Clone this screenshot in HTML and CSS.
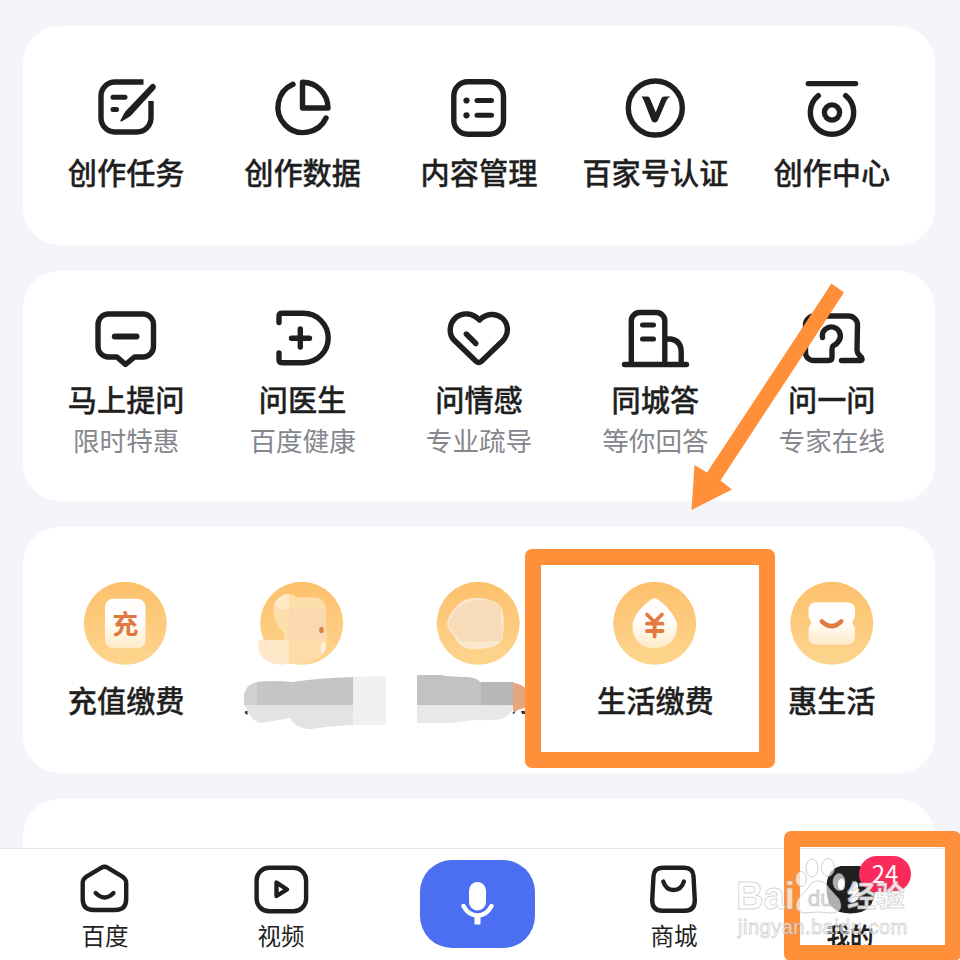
FILE: index.html
```html
<!DOCTYPE html>
<html lang="zh-CN">
<head>
<meta charset="utf-8">
<title>我的</title>
<link rel="stylesheet" href="styles.css">
</head>
<body>
<svg class="defs" width="0" height="0" aria-hidden="true">
  <defs>
    <linearGradient id="coin" x1="0" y1="0" x2="0" y2="1"><stop offset="0" stop-color="#fdc06c"/><stop offset="1" stop-color="#fdd58e"/></linearGradient>
    <linearGradient id="paper" x1="0" y1="0" x2="0" y2="1"><stop offset=".45" stop-color="#fffefc"/><stop offset="1" stop-color="#feeac6"/></linearGradient>
  </defs>
</svg>
<main class="page">
  <section class="card card-create">
    <div class="item">
      <svg class="icon" viewBox="90 72 72 72"><path class="flat" d="M143.500 82H115a14 14 0 0 0-14 14v22a14 14 0 0 0 14 14h22a14 14 0 0 0 14-14v-17"/><path class="w5" d="M113 97.2h12M113 109.500h3.500"/><path class="solid" d="M151 84.600q2.200-1.600 4 .2t.2 4.200L132 114.500q-2 2.200-4.500 3.400l-6 3.600q-1.500.5-1-1.200l3-5.800q1-2.200 3-4.200z"/></svg>
      <span class="label">创作任务</span>
    </div>
    <div class="item">
      <svg class="icon" viewBox="267 72 72 72"><path d="M293 84.300A25.200 25.200 0 1 0 326 118"/><path d="M302.500 82.300a25.500 25.500 0 0 1 25.500 25.700h-25.500z"/></svg>
      <span class="label">创作数据</span>
    </div>
    <div class="item">
      <svg class="icon" viewBox="443 72 72 72"><rect x="453.800" y="81.700" width="49.700" height="52.600" rx="14"/><path class="w5" d="M477 100.500h14.500M477 115.300h14.500"/><circle class="solid" cx="466.500" cy="100.500" r="3.100"/><circle class="solid" cx="466.500" cy="115.300" r="3.100"/></svg>
      <span class="label">内容管理</span>
    </div>
    <div class="item">
      <svg class="icon" viewBox="619 72 72 72"><circle cx="655.300" cy="108" r="27"/><path class="solid" d="M641.500 96.500h6q1.600 0 2.300 1.600l6 14.200 5.400-13.600q.9-2.200 3.200-2.200h6.100q-2.600 1.200-3.800 3.600l-8.600 19.900q-.9 2.600-3.400 2.600t-3.300-2.500l-7.700-19.800q-.8-2-2.200-3.800z"/></svg>
      <span class="label">百家号认证</span>
    </div>
    <div class="item">
      <svg class="icon" viewBox="796 72 72 72"><path d="M808.300 83.600h47.300M818.300 95.700a21.700 21.700 0 1 0 27.400 0"/><circle cx="832" cy="112.500" r="7.600"/></svg>
      <span class="label">创作中心</span>
    </div>
  </section>

  <section class="card card-ask">
    <div class="item">
      <svg class="icon" viewBox="90 302 72 72"><path d="M109 314h34a10.500 10.500 0 0 1 10.500 10.500v22a10.500 10.500 0 0 1-10.500 10.500h-8.500l-9 7.500-8.500-7.500h-8a10.500 10.500 0 0 1-11-10.500v-22a10.500 10.500 0 0 1 11-10.500z"/><path class="w6" d="M114.800 336.500h21.700"/></svg>
      <span class="label">马上提问</span><span class="sub">限时特惠</span>
    </div>
    <div class="item">
      <svg class="icon" viewBox="267 302 72 72"><path d="M279 322.500v-6.200q0-3 3-3h21.500a24.700 24.700 0 0 1 0 49.400H282q-3 0-3-3v-6.700"/><path d="M300.300 329v18M291.500 338.300h18"/></svg>
      <span class="label">问医生</span><span class="sub">百度健康</span>
    </div>
    <div class="item">
      <svg class="icon" viewBox="443 302 72 72"><path d="M479.500 320C473 313 463 312 456.500 317 449 323 448 334 454.500 340.500L476 361.300q2.800 2.400 5.500 0L503 340.500C509.500 333 508.500 323.500 502 318 495 312.500 486 313.500 479.500 320z"/><path d="M466.300 334l9.500 9.500"/></svg>
      <span class="label">问情感</span><span class="sub">专业疏导</span>
    </div>
    <div class="item">
      <svg class="icon" viewBox="619 302 72 72"><path d="M624.500 364.500h62M631.300 364v-43a8.500 8.500 0 0 1 8.500-8.500h16.500a8.500 8.500 0 0 1 8.500 8.500v43M667 338.700q14.200.3 14.200 13V364"/><path class="w5" d="M642.500 325h11M642.500 339h11"/></svg>
      <span class="label">同城答</span><span class="sub">等你回答</span>
    </div>
    <div class="item">
      <svg class="icon" viewBox="796 302 72 72"><path d="M822.500 337.500a9 9 0 1 1 15.500 4.500q-1.500 2.500-5 4-1 1-1 4v7q0 3.500-3.500 3.500h-15a8 8 0 0 1-8-8V325a9 9 0 0 1 9-9h34a9 9 0 0 1 9 9l-.5 25q0 3 2.500 5.500l2 2q1.500 3-1 3h-19"/></svg>
      <span class="label">问一问</span><span class="sub">专家在线</span>
    </div>
  </section>

  <section class="card card-pay">
    <div class="item">
      <svg class="coin" viewBox="84 581 84 84"><circle cx="125.300" cy="623.300" r="41.500" fill="url(#coin)"/><rect x="105" y="598.800" width="40.500" height="49.500" rx="8" fill="url(#paper)"/><text class="coin-text" x="125.200" y="633.800">充</text></svg>
      <span class="label">充值缴费</span>
    </div>
    <div class="item">
      <svg class="coin" viewBox="261 581 84 84"><circle cx="301.700" cy="623.300" r="41.500" fill="url(#coin)"/></svg>
      <span class="label"></span>
    </div>
    <div class="item">
      <svg class="coin" viewBox="437 581 84 84"><circle cx="478.200" cy="623.300" r="41.500" fill="url(#coin)"/><path fill="#fbe7cd" d="M476 597.800q-14 .2-22 11-5 6-7 15 1 6 7 12 4 10 12 12.500 12 2.500 25-1 8-2 11-7.300 4-20-.5-32-5-9-25.500-10.200z"/><path fill="#f8dcba" d="M464 604q10-6 27-3 7 2 10 6-1 12 1 20 0 8-1 14-20 2-41 0l-12-15q2-13 16-22z"/></svg>
      <span class="label"></span>
    </div>
    <div class="item">
      <svg class="coin" viewBox="613 581 84 84"><circle cx="654.700" cy="623.300" r="41.500" fill="url(#coin)"/><path fill="url(#paper)" d="M651 599.500q3.500-2.600 7 0 9 6.500 15 15.500 4 6 4 11c0 13-8.500 22.200-22.500 22.200S632.500 639 632.500 626q0-5 3.500-11 6-9 15-15.500z"/><path class="ink" d="M647 614.500l7.500 7.500 7.500-7.500M647 623.700h15.500M647 631h15.500M654.600 622v14.500"/></svg>
      <span class="label">生活缴费</span>
    </div>
    <div class="item">
      <svg class="coin" viewBox="789.500 581 84 84"><circle cx="831.300" cy="623.300" r="41.500" fill="url(#coin)"/><path fill="url(#paper)" d="M816 602.300h30q8.500 0 8.500 8v5q0 2.500-1.500 4.500-2 3 0 5.500 1.500 2 1.500 4.500v7q0 8-8.500 8h-30q-8 0-8-8v-7q0-2.500 1.500-4.500 2-2.500 0-5.500-1.500-2-1.500-4.500v-5q0-8 8-8z"/><path class="ink smile" d="M821.300 621.300q9.700 9.500 19.500 0"/></svg>
      <span class="label">惠生活</span>
    </div>
  </section>
  <section class="card card-next"></section>
</main>

<nav class="tabbar">
  <div class="tab">
    <svg class="tab-icon" viewBox="75 861 60 56"><path d="M101.500 867.700q3-1.800 6 0l15 9q3.700 2.300 3.700 6.800v15.500q0 11-11 11h-21.500q-11 0-11-11v-15.500q0-4.500 3.700-6.800z"/><path d="M95.700 893q9 9 17.800 0"/></svg>
    <span>百度</span>
  </div>
  <div class="tab">
    <svg class="tab-icon" viewBox="251 861 60 56"><rect x="256.600" y="867.800" width="49.500" height="43.500" rx="12.500"/><path d="M276.500 882.500v13.500l10.500-6.500z"/></svg>
    <span>视频</span>
  </div>
  <div class="tab">
    <div class="voice">
      <svg viewBox="455 876 46 54"><rect x="469" y="882" width="17" height="28.500" rx="8.500" fill="#fff"/><path d="M463.500 906q5 9.500 14 9.500t14-9.500" fill="none" stroke="#fff" stroke-width="4.500" stroke-linecap="round"/><path d="M474.500 916h6v8.500h-6z" fill="#fff"/></svg>
    </div>
  </div>
  <div class="tab">
    <svg class="tab-icon" viewBox="644 861 60 56"><path d="M662.500 867.700h22q8.500 0 9 8.500l1.300 24q0 10.500-10 10.500h-22.600q-10 0-10-10.500l1.300-24q.5-8.500 9-8.500z"/><path d="M663.300 881.500q2.500 8.500 10.300 8.500t10.300-8.500"/></svg>
    <span>商城</span>
  </div>
  <div class="tab tab-active">
    <svg class="tab-icon" viewBox="820 861 60 56"><path class="solid" d="M841 866h18q16 3 16 22 0 25.500-24.500 25.500T826.500 888q0-19 14.500-22z"/><ellipse class="glint" cx="841.500" cy="884.500" rx="3.500" ry="6"/><path class="glint" d="M849 902q4-3 4-8-4 1-6-1 7-2 8-12 4 1 3 9 4 5-1 10-3 4-8 2z"/></svg>
    <span>我的</span>
    <b class="badge">24</b>
  </div>
</nav>

<!-- Smudges and pointer drawn over the page -->
<svg class="marks" viewBox="0 0 960 960">
  <path fill="#fddfab" d="M274 604q3-7 12-10 8 0 11 4 10-2 22 0 7 4 7 12v19q2 10-1 23l-25 9h-14l-2-28q-13-12-10-29z"/>
  <path fill="#fad9b2" d="M289 609h36q2 12 1 31h-37z"/>
  <path fill="#fee8c8" d="M274 604q3-7 12-10h3v15h-12zM260 640h29v22q-4 4-14 2-16-5-17-18 0-5 2-6z"/>
  <path fill="#fddcaa" d="M289 640h37q0 9-4 15-8 7-22 9h-11z"/>
  <path fill="#fff0da" d="M322 643q3-2 4 0 0 8-4 12-3-5 0-12z"/>
  <ellipse cx="321.500" cy="630" rx="2.300" ry="3.200" fill="#d68545"/>
  <path fill="#d0d0d1" d="M257 682q-11 2-13 13v10h13z"/>
  <path fill="#c5c5c6" d="M257 682q13-2 35 0 26-4 61-5v28h-96z"/>
  <path fill="#e3e3e5" d="M245 705h108v20q-24 1-42 4-14 1-21-11-16 3-30 5-10-3-15-18z"/>
  <path fill="#f0f0f1" d="M353 677l33-1v49h-33z"/>
  <path fill="#333" d="M245.500 711l2 0v4l-3-2z"/>
  <path fill="#c2c2c2" d="M417 675h24q12 2 27 2 10 1 13 6v22h-64z"/>
  <path fill="#b7b7b8" d="M481 682h33v23h-33z"/>
  <path fill="#e7e8e8" d="M417 705h97q-2 9-12 14-14 2-28 1l-24 3h-33z"/>
  <path fill="#e5a67f" d="M513 683q8 0 14 7v17q-7 2-14 5z"/>
  <path fill="#333" d="M512 713l4-2-2 3zM521 711h5v3h-4z"/>
  <path fill="#ff8f38" d="M831.500 283.500l12.500 9-123.500 188 11.500 9-40.500 20.500 3-45 12.500 7.500z"/>
</svg>
<div class="frame frame-pay"></div>
<div class="frame frame-mine"></div>

<div class="watermark">
  <svg class="paw" viewBox="790 850 60 66"><ellipse cx="801" cy="878" rx="5.500" ry="7.500"/><ellipse cx="812" cy="867" rx="6" ry="9"/><ellipse cx="828" cy="866.500" rx="6.500" ry="9"/><ellipse cx="839" cy="881" rx="6" ry="8.500"/><path d="M818 880q7 0 11 7l10 11q6 13-7 14-14-2-28 0-12-2-6-14l10-11q3-7 10-7z"/></svg>
  <span class="wm wm-bai">Bai</span>
  <span class="wm wm-du">du</span>
  <span class="wm wm-jy">经验</span>
  <span class="wm wm-url">jingyan.baidu.com</span>
</div>
</body>
</html>
```
FILE: styles.css
```css
* { box-sizing: border-box; }

body {
  position: relative;
  width: 960px;
  height: 960px;
  margin: 0;
  overflow: hidden;
  background: #f4f5fa;
  color: #1f1f1f;
  font-family: "Noto Sans CJK SC", sans-serif;
}

.defs { position: absolute; }

.page {
  display: flex;
  flex-direction: column;
  gap: 26px;
  height: 960px;
  padding: 26px 25px 0 23px;
}

.card {
  display: grid;
  grid-template-columns: repeat(5, 1fr);
  flex: none;
  padding: 0 15px;
  border-radius: 37px;
  background: #fff;
}

.card-create { height: 219px; padding-top: 46px; }
.card-ask { height: 230px; padding-top: 31px; }
.card-pay { height: 246px; padding-top: 54px; }
.card-next { height: 200px; }

.item {
  display: flex;
  flex-direction: column;
  align-items: center;
}

.icon, .tab-icon {
  fill: none;
  stroke: #1f1f1f;
  stroke-width: 5.4;
  stroke-linecap: round;
  stroke-linejoin: round;
}

.icon { width: 72px; height: 72px; }
.icon .flat { stroke-linecap: butt; }
.icon .w5 { stroke-width: 5; }
.icon .w6 { stroke-width: 6; }
.solid { fill: #1f1f1f; stroke: none; }
.glint { fill: #fff; stroke: none; }

.coin { width: 84px; height: 84px; overflow: visible; }

.coin-text {
  fill: #e0773f;
  font-size: 26px;
  font-weight: 700;
  text-anchor: middle;
}

.ink {
  fill: none;
  stroke: #e27a42;
  stroke-width: 3.8;
  stroke-linecap: round;
}

.ink.smile { stroke-width: 4.5; }

.label {
  height: 36px;
  margin-top: 9px;
  font-size: 29.2px;
  font-weight: 500;
  line-height: 36px;
  white-space: nowrap;
  -webkit-text-stroke: .3px #1f1f1f;
}

.card-ask .label { margin-top: 6px; }
.card-pay .label { margin-top: 16px; }

.sub {
  margin-top: 8px;
  color: #86878d;
  font-size: 26.6px;
  line-height: 32px;
}

.tabbar {
  position: absolute;
  left: 0;
  bottom: 0;
  display: grid;
  grid-template-columns: 176px 176px 217px 176px 176px;
  width: 960px;
  height: 112px;
  padding: 12px 0 0 17px;
  border-top: 1px solid #e6e7ea;
  background: #fff;
}

.tab {
  position: relative;
  display: flex;
  flex-direction: column;
  align-items: center;
  font-size: 23.5px;
  line-height: 30px;
}

.tab-icon { width: 60px; height: 56px; margin-bottom: 3px; stroke-width: 4.4; }
.tab-active { font-weight: 700; }

.voice {
  display: flex;
  align-items: center;
  justify-content: center;
  width: 115px;
  height: 88px;
  margin-top: -1px;
  border-radius: 32px;
  background: #4c6ef1;
}

.voice svg { width: 46px; height: 54px; margin-top: -2px; }

.badge {
  position: absolute;
  top: -5px;
  left: 97px;
  width: 52px;
  height: 36px;
  border-radius: 18px;
  background: #fa2b5b;
  color: #fff;
  font: 400 24px/34px "Noto Sans CJK SC", sans-serif;
  text-align: center;
}

.marks {
  position: absolute;
  top: 0;
  left: 0;
  width: 960px;
  height: 960px;
}

.frame {
  position: absolute;
  border: 16px solid #ff8f38;
  border-radius: 7px;
}

.frame-pay { top: 549px; left: 525px; width: 250px; height: 219px; }
.frame-mine { top: 831px; left: 784px; width: 177px; height: 130px; }

.watermark {
  position: absolute;
  top: 850px;
  left: 730px;
  width: 190px;
  height: 96px;
}

.paw {
  position: absolute;
  top: 8px;
  left: 60px;
  width: 60px;
  height: 66px;
  margin-top: -7px;
  fill: rgba(255, 255, 255, .65);
  stroke: rgba(170, 170, 170, .55);
}

.wm {
  position: absolute;
  color: rgba(255, 255, 255, .7);
  font-family: "Liberation Sans", sans-serif;
  font-weight: 700;
  white-space: nowrap;
  -webkit-text-stroke: 1px rgba(175, 175, 175, .5);
}

.wm-bai { top: 23px; left: 6px; font-size: 38px; line-height: 46px; }
.wm-du { top: 34px; left: 78px; font-size: 22px; font-weight: 400; line-height: 30px; color: rgba(170, 170, 170, .4); }
.wm-jy { top: 27px; left: 117px; font: 700 29px/34px "Noto Sans CJK SC", sans-serif; color: rgba(255, 255, 255, .85); }
.wm-url { top: 64px; left: 8px; font-size: 20px; font-weight: 400; line-height: 26px; letter-spacing: .5px; }
```
